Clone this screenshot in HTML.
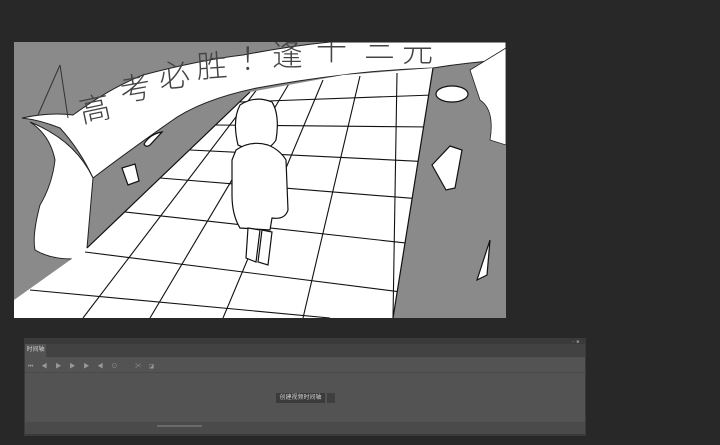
<!DOCTYPE html>
<html><head><meta charset="utf-8"><style>
html,body{margin:0;padding:0;width:720px;height:445px;overflow:hidden;background:#282828;font-family:"Liberation Sans","Noto Sans CJK SC",sans-serif}
.abs{position:absolute}
</style></head><body>
<svg class="abs" style="left:14px;top:42px" width="492" height="276" viewBox="14 42 492 276">
<defs><clipPath id="fl"><polygon points="250,92 343,75 433,68 393,318 14,318 14,300 87,248"/></clipPath>
<clipPath id="cv"><rect x="14" y="42" width="492" height="276"/></clipPath></defs>
<g clip-path="url(#cv)">
<rect x="14" y="42" width="492" height="276" fill="#8a8a8a"/>
<path d="M22,118 Q50,112 73,115 Q110,88 143,75 Q200,60 243,55 Q290,46 330,42 L506,42 L506,60 Q470,62 433,68 Q380,70 343,75 Q300,80 257,88 Q200,100 170,122 Q130,150 93,178 Q80,150 60,128 Q40,120 22,118Z" fill="#fff" stroke="#222" stroke-width="1"/>
<path d="M30,122 Q50,135 55,160 Q52,185 40,205 Q32,235 35,250 Q55,262 87,258 L87,248 L93,178 Q75,140 30,122Z" fill="#fff" stroke="#222" stroke-width="1"/>
<path d="M470,70 L506,48 L506,145 L490,140 Q495,110 480,100Z" fill="#fff" stroke="#222" stroke-width="0.8"/>
<polygon points="250,92 343,75 433,68 393,318 14,318 14,300 87,248" fill="#fff"/>
<g clip-path="url(#fl)" stroke="#111" stroke-width="1.1">
<line x1="83" y1="318" x2="258" y2="88"/><line x1="150" y1="318" x2="290" y2="82"/><line x1="223" y1="318" x2="323" y2="80"/><line x1="303" y1="318" x2="360" y2="76"/><line x1="393" y1="318" x2="397" y2="73"/>
<line x1="240" y1="102" x2="433" y2="95"/><line x1="215" y1="125" x2="433" y2="127"/><line x1="190" y1="150" x2="433" y2="162"/><line x1="160" y1="178" x2="433" y2="200"/><line x1="125" y1="212" x2="433" y2="246"/><line x1="85" y1="252" x2="433" y2="296"/><line x1="30" y1="290" x2="330" y2="318"/>
</g>
<polyline points="250,92 87,248" stroke="#111" fill="none" stroke-width="1.2"/>
<polyline points="433,68 393,318" stroke="#111" fill="none" stroke-width="1.2"/>
<g font-size="31" font-family="Noto Sans CJK SC,sans-serif" font-weight="300" fill="#444">
<text x="82" y="123" transform="rotate(-12 82 123)">高</text>
<text x="122" y="102" transform="rotate(-10 122 102)">考</text>
<text x="160" y="88" transform="rotate(-6 160 88)">必</text>
<text x="197" y="78" transform="rotate(-4 197 78)">胜</text>
<text x="240" y="70">！</text>
<text x="272" y="66">逢</text>
<text x="316" y="60">千</text>
<text x="364" y="58">三</text>
<text x="402" y="62">元</text>
</g>
<g fill="#fff" stroke="#111" stroke-width="1.2">
<path d="M238,145 Q232,120 240,105 Q255,95 272,102 Q280,115 276,140 Q270,150 255,152Z"/>
<path d="M236,150 Q250,140 268,145 Q280,150 286,160 L288,210 Q285,220 272,218 L270,230 L240,228 Q232,215 232,195 L232,160Z"/>
<path d="M248,228 L246,258 L256,262 L260,230Z"/><path d="M262,230 L258,262 L268,265 L272,232Z"/>
<path d="M144,144 Q150,134 162,132 L150,145 Q146,148 144,144Z"/>
<path d="M122,168 L135,164 L139,181 L128,185Z"/>
<ellipse cx="452" cy="94" rx="16" ry="8"/>
<path d="M432,165 L450,146 L462,150 L455,188 L446,190 Z"/>
<path d="M477,280 L490,240 L487,275 Z"/>
</g>
<line x1="38" y1="115" x2="60" y2="65" stroke="#333"/><line x1="60" y1="65" x2="68" y2="118" stroke="#333"/>
</g>
</svg>
<div class="abs" style="left:24px;top:338px;width:562px;height:98px;background:#3a3a3a"></div>
<div class="abs" style="left:25px;top:344px;width:560px;height:13px;background:#424242"></div>
<div class="abs" style="left:25px;top:344px;width:21px;height:13px;background:#535353;color:#ccc;font-size:6px;line-height:13px;text-align:center">时间轴</div>
<div class="abs" style="left:25px;top:357px;width:560px;height:65px;background:#535353"></div>
<div class="abs" style="left:25px;top:372px;width:560px;height:1px;background:#4a4a4a"></div>
<div class="abs" style="left:28px;top:361px;color:#999;font-size:6px;letter-spacing:8px;white-space:nowrap">⏮◀▶▶▶◀⊙ ✂◪</div>
<div class="abs" style="left:276px;top:393px;width:49px;height:10px;background:#3b3b3b;color:#ccc;font-size:6px;line-height:10px;text-align:center">创建视频时间轴</div>
<div class="abs" style="left:327px;top:393px;width:8px;height:10px;background:#3f3f3f"></div>
<div class="abs" style="left:25px;top:422px;width:560px;height:12px;background:#4a4a4a"></div>
<div class="abs" style="left:157px;top:425px;width:45px;height:2px;background:#6a6a6a"></div>
<div class="abs" style="left:572px;top:339px;color:#888;font-size:5px">− ■</div>
</body></html>
